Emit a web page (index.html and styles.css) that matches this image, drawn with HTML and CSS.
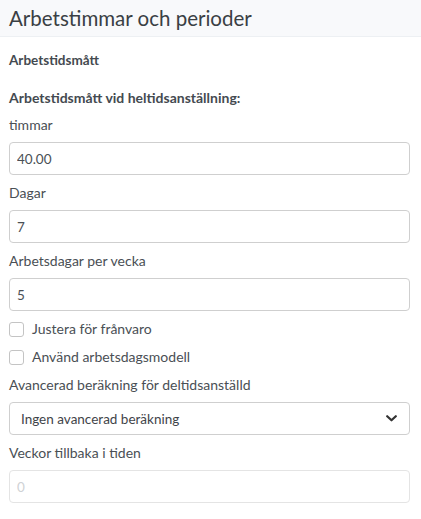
FILE: index.html
```html
<!DOCTYPE html>
<html lang="sv">
<head>
<meta charset="utf-8">
<link rel="stylesheet" href="styles.css">
</head>
<body>
<div class="header"><h1 class="title">Arbetstimmar och perioder</h1></div>
<div class="content">
  <div class="section-title first">Arbetstidsmått</div>
  <div class="section-title second">Arbetstidsmått vid heltidsanställning:</div>
  <div class="field">
    <label class="label">timmar</label>
    <input class="input" type="text" value="40.00">
  </div>
  <div class="field">
    <label class="label">Dagar</label>
    <input class="input" type="text" value="7">
  </div>
  <div class="field">
    <label class="label">Arbetsdagar per vecka</label>
    <input class="input" type="text" value="5">
  </div>
  <label class="check"><span class="box"></span><span>Justera för frånvaro</span></label>
  <label class="check"><span class="box"></span><span>Använd arbetsdagsmodell</span></label>
  <div class="field">
    <label class="label">Avancerad beräkning för deltidsanställd</label>
    <div class="select"><span>Ingen avancerad beräkning</span>
      <svg class="chev" width="11" height="7" viewBox="0 0 11 7"><path d="M1.2 1.2 L5.5 5.3 L9.8 1.2" fill="none" stroke="#333" stroke-width="2.2" stroke-linecap="round" stroke-linejoin="round"/></svg>
    </div>
  </div>
  <div class="field">
    <label class="label">Veckor tillbaka i tiden</label>
    <input class="input disabled" type="text" placeholder="0" disabled>
  </div>
</div>
</body>
</html>
```
FILE: styles.css
```css
html, body { margin: 0; padding: 0; background: #fff; }
body { font-family: Lato, "Noto Sans", sans-serif; color: #444a50; font-size: 14px; }
.header { height: 36px; background: #f8f9fb; border-bottom: 1px solid #edf0f3; padding-left: 9px; }
.title { margin: 0; font-size: 20.5px; line-height: 34px; padding-top: 1px; font-weight: 400; color: #3a3f44; }
.content { padding: 0 11px 0 9px; display: flex; flex-direction: column; }
.section-title { font-weight: 700; line-height: 20px; color: #444a50; }
.section-title.first { font-size: 13.5px; margin-top: 13px; margin-bottom: 18px; }
.section-title.second { font-size: 14px; margin-bottom: 7px; }
.field { display: flex; flex-direction: column; margin-bottom: 8px; }
.label { line-height: 20px; margin-bottom: 7px; color: #4a4f55; }
.input { box-sizing: border-box; height: 33px; border: 1px solid #cfcfcf; border-radius: 4px; padding: 0 7px; font: inherit; font-size: 13.5px; color: #4a4f55; background: #fff; outline: none; }
.input.disabled { border-color: #e4e4e4; background: #fff; }
.input.disabled::placeholder { color: #cfd2d5; }
.check { display: flex; align-items: center; gap: 8px; line-height: 20px; margin-bottom: 8px; color: #4a4f55; }
.box { width: 13px; height: 13px; border: 1px solid #c4c4c4; border-radius: 3px; background: #fff; }
.select { box-sizing: border-box; height: 33px; border: 1px solid #cfcfcf; border-radius: 4px; padding: 0 12px 0 11px; display: flex; align-items: center; justify-content: space-between; color: #3f4449; font-size: 13.5px; }
.chev { display: block; }
```
